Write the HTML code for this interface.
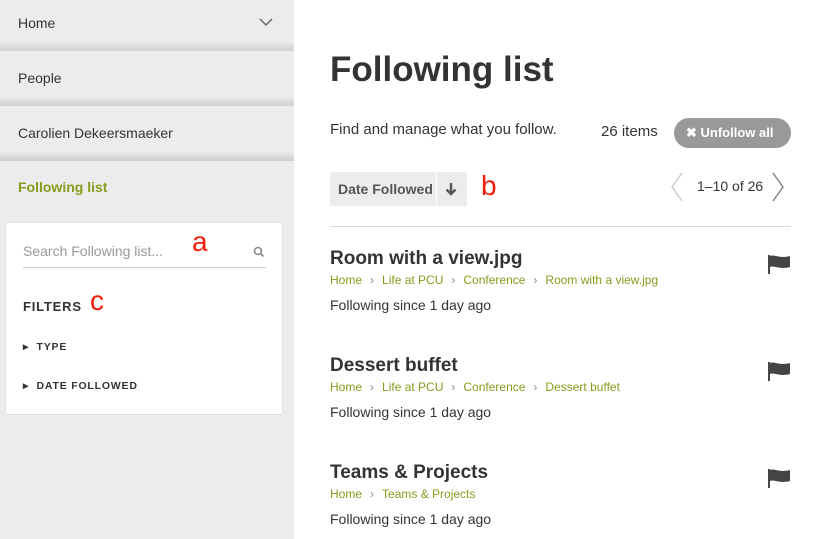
<!DOCTYPE html>
<html><head><style>
*{margin:0;padding:0;box-sizing:border-box}
body{width:823px;height:539px;overflow:hidden;background:#fff;font-family:"Liberation Sans",sans-serif;color:#333;position:relative}
.side{position:absolute;left:0;top:0;width:294px;height:539px;background:#ececec}
.nav{position:absolute;left:18px;font-size:14px;color:#333}
.sh{position:absolute;left:0;width:294px;height:10px;background:linear-gradient(#ececec,#cfcfcf)}
.card{position:absolute;left:5px;top:222px;width:278px;height:193px;background:#fff;border-radius:3px;border:1px solid #e0e0e0}
.abs{position:absolute}
.red{color:#f21c0c;font-size:28px;position:absolute}
.item h2{font-size:19px;font-weight:bold;color:#333}
.bc{font-size:12px;color:#8a9a1c;margin-top:3px}
.bc span{margin:0 8px;color:#888}
.fs{font-size:14px;color:#333;margin-top:10px}
</style></head><body>
<div class="side">
 <div class="nav" style="top:15px">Home</div>
 <svg class="abs" style="left:259px;top:17px" width="14" height="10"><path d="M1 2l6 6 6-6" stroke="#666" stroke-width="1.5" fill="none"/></svg>
 <div class="sh" style="top:41px"></div>
 <div class="nav" style="top:70px">People</div>
 <div class="sh" style="top:96px"></div>
 <div class="nav" style="top:125px">Carolien Dekeersmaeker</div>
 <div class="sh" style="top:151px"></div>
 <div class="nav" style="top:179px;color:#8a9a1c;font-weight:bold">Following list</div>
 <div class="card">
  <div class="abs" style="left:17px;top:20px;font-size:14px;color:#999">Search Following list...</div>
  <svg class="abs" style="left:247px;top:23px" width="12" height="12"><circle cx="5" cy="5" r="3.5" stroke="#888" stroke-width="1.6" fill="none"/><path d="M7.5 7.5l3 3" stroke="#888" stroke-width="1.8"/></svg>
  <div class="abs" style="left:17px;top:44px;width:243px;height:1px;background:#d0d0d0"></div>
  <div class="abs" style="left:17px;top:76px;font-size:13px;font-weight:bold;letter-spacing:.8px">FILTERS</div>
  <div class="abs" style="left:17px;top:118px;font-size:10.5px;font-weight:bold;letter-spacing:.8px">&#9656;&nbsp; TYPE</div>
  <div class="abs" style="left:17px;top:157px;font-size:10.5px;font-weight:bold;letter-spacing:.8px">&#9656;&nbsp; DATE FOLLOWED</div>
 </div>
 <div class="red" style="left:192px;top:226px">a</div>
 <div class="red" style="left:90px;top:285px">c</div>
</div>
<div class="abs" style="left:330px;top:50px;font-size:35px;font-weight:bold;color:#333">Following list</div>
<div class="abs" style="left:330px;top:121px;font-size:15px">Find and manage what you follow.</div>
<div class="abs" style="left:601px;top:123px;font-size:15px">26 items</div>
<div class="abs" style="left:674px;top:118px;width:117px;height:30px;border-radius:15px;background:#999;color:#fff;font-size:13px;font-weight:bold;line-height:30px;padding-left:12px">&#10006; Unfollow all</div>
<div class="abs" style="left:330px;top:172px;width:137px;height:34px;background:#ececec;border-radius:2px"></div>
<div class="abs" style="left:436px;top:172px;width:1px;height:34px;background:#fff"></div>
<div class="abs" style="left:338px;top:181px;font-size:14px;font-weight:bold;color:#555">Date Followed</div>
<svg class="abs" style="left:445px;top:182px" width="12" height="14"><path d="M6 1v11M1.5 7.5L6 12l4.5-4.5" stroke="#555" stroke-width="2.4" fill="none"/></svg>
<div class="red" style="left:481px;top:170px">b</div>
<svg class="abs" style="left:670px;top:172px" width="14" height="30"><path d="M12 1L2 15l10 14" stroke="#ccc" stroke-width="1.5" fill="none"/></svg>
<div class="abs" style="left:697px;top:178px;font-size:14px">1–10 of 26</div>
<svg class="abs" style="left:771px;top:172px" width="14" height="30"><path d="M2 1l10 14L2 29" stroke="#888" stroke-width="1.5" fill="none"/></svg>
<div class="abs" style="left:330px;top:226px;width:461px;height:1px;background:#d8d8d8"></div>
<div class="abs item" style="left:330px;top:248px"><h2>Room with a view.jpg</h2><div class="bc">Home<span>›</span>Life at PCU<span>›</span>Conference<span>›</span>Room with a view.jpg</div><div class="fs">Following since 1 day ago</div></div>
<div class="abs item" style="left:330px;top:355px"><h2>Dessert buffet</h2><div class="bc">Home<span>›</span>Life at PCU<span>›</span>Conference<span>›</span>Dessert buffet</div><div class="fs">Following since 1 day ago</div></div>
<div class="abs item" style="left:330px;top:462px"><h2>Teams &amp; Projects</h2><div class="bc">Home<span>›</span>Teams &amp; Projects</div><div class="fs">Following since 1 day ago</div></div>
<svg class="abs" style="left:767px;top:254px" width="25" height="20"><path d="M2 1v19" stroke="#444" stroke-width="2"/><path d="M3 2c5-2 9 3 20 0v11c-11 3-15-2-20 0z" fill="#444"/></svg>
<svg class="abs" style="left:767px;top:361px" width="25" height="20"><path d="M2 1v19" stroke="#444" stroke-width="2"/><path d="M3 2c5-2 9 3 20 0v11c-11 3-15-2-20 0z" fill="#444"/></svg>
<svg class="abs" style="left:767px;top:468px" width="25" height="20"><path d="M2 1v19" stroke="#444" stroke-width="2"/><path d="M3 2c5-2 9 3 20 0v11c-11 3-15-2-20 0z" fill="#444"/></svg>
</body></html>
